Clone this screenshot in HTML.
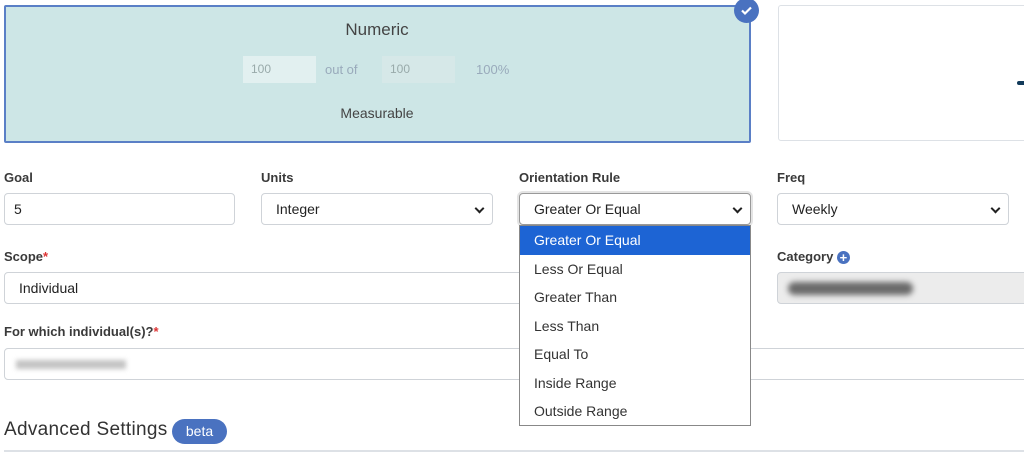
<!DOCTYPE html>
<html><head><style>
body{margin:0;width:1024px;height:452px;overflow:hidden;background:#fff;font-family:"Liberation Sans",sans-serif;color:#333;position:relative}
.a{position:absolute}
.lbl{font-weight:bold;font-size:13px;color:#3a3a3a}
.in{position:absolute;border:1px solid #cfd3d8;border-radius:4px;background:#fff;font-size:14px;line-height:30px;padding-left:14px;box-sizing:border-box;height:32px;color:#222}
.chev{position:absolute;right:9px;top:11px;width:5px;height:5px;border-right:2px solid #222;border-bottom:2px solid #222;transform:rotate(45deg)}
.opt{height:28.5px;line-height:28.5px;padding-left:14px;font-size:14px;color:#333}
</style></head><body>
<div class="a" style="left:4px;top:5px;width:743px;height:134px;border:2px solid #5a7fc6;background:#cde6e6;border-radius:2px"></div>
<div class="a" style="left:0;top:20px;width:754px;text-align:center;font-size:17px;color:#444">Numeric</div>
<div class="a" style="left:243px;top:56px;width:73px;height:27px;background:#e2f0f0;font-size:12px;color:#9aa;line-height:27px;padding-left:8px;box-sizing:border-box">100</div>
<div class="a" style="left:325px;top:62px;font-size:13px;color:#9ab">out of</div>
<div class="a" style="left:382px;top:56px;width:73px;height:27px;background:#d6e8e8;font-size:12px;color:#9aa;line-height:27px;padding-left:8px;box-sizing:border-box">100</div>
<div class="a" style="left:476px;top:62px;font-size:13px;color:#9ab">100%</div>
<div class="a" style="left:0;top:105px;width:754px;text-align:center;font-size:14px;color:#444">Measurable</div>
<div class="a" style="left:734px;top:-2px;width:25px;height:25px;border-radius:50%;background:#4a72c0"><svg width="25" height="25"><path d="M8 12.5l3 3 6-6" stroke="#fff" stroke-width="2.2" fill="none"/></svg></div>
<div class="a" style="left:778px;top:5px;width:260px;height:134px;border:1.5px solid #dde1e6;border-radius:3px"></div>
<div class="a" style="left:1017px;top:81px;width:10px;height:4px;background:#123a5a;border-radius:2px"></div>

<div class="a lbl" style="left:4px;top:170px">Goal</div>
<div class="a lbl" style="left:261px;top:170px">Units</div>
<div class="a lbl" style="left:519px;top:170px">Orientation Rule</div>
<div class="a lbl" style="left:777px;top:170px">Freq</div>
<div class="in" style="left:4px;top:193px;width:231px;padding-left:9px">5</div>
<div class="in" style="left:261px;top:193px;width:232px">Integer<span class="chev"></span></div>
<div class="in" style="left:519px;top:193px;width:232px;border-color:#999;box-shadow:0 0 0 2px #e4e4e4">Greater Or Equal<span class="chev"></span></div>
<div class="in" style="left:777px;top:193px;width:232px">Weekly<span class="chev"></span></div>

<div class="a lbl" style="left:4px;top:249px">Scope<span style="color:#d33">*</span></div>
<div class="in" style="left:4px;top:272px;width:740px">Individual</div>
<div class="a lbl" style="left:777px;top:249px">Category <span style="display:inline-block;width:13px;height:13px;border-radius:50%;background:#4a72c0;color:#fff;text-align:center;line-height:13px;font-size:13px;vertical-align:-1px">+</span></div>
<div class="in" style="left:777px;top:272px;width:260px;background:#ececec"><span style="display:inline-block;margin-left:-4px;margin-top:9px;width:125px;height:13px;border-radius:7px;background:#6a6a6a;filter:blur(3px);vertical-align:top"></span></div>
<div class="a lbl" style="left:4px;top:324px">For which individual(s)?<span style="color:#d33">*</span></div>
<div class="in" style="left:4px;top:348px;width:1030px"><span style="display:inline-block;margin-top:11px;width:110px;height:9px;background:#c4c4c4;filter:blur(2.5px);vertical-align:top;margin-left:-3px"></span></div>

<div class="a" style="left:519px;top:225px;width:230px;height:199px;border:1px solid #888;background:#fff">
<div class="opt" style="background:#1d64d4;color:#fff">Greater Or Equal</div>
<div class="opt">Less Or Equal</div>
<div class="opt">Greater Than</div>
<div class="opt">Less Than</div>
<div class="opt">Equal To</div>
<div class="opt">Inside Range</div>
<div class="opt">Outside Range</div>
</div>

<div class="a" style="left:4px;top:419px;font-size:19px;color:#333;letter-spacing:0.3px">Advanced Settings</div>
<div class="a" style="left:172px;top:419px;width:55px;height:25px;border-radius:13px;background:#4a72c0;color:#fff;font-size:14px;text-align:center;line-height:25px">beta</div>
<div class="a" style="left:4px;top:450px;width:1020px;height:2px;background:#dde1e6"></div>
</body></html>
